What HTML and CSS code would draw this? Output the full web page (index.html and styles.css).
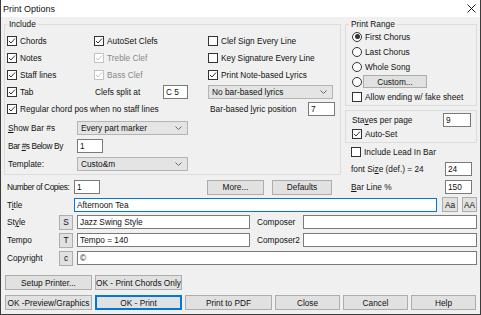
FILE: index.html
```html
<!DOCTYPE html>
<html lang="en">
<head>
  <meta charset="UTF-8">
  <title>Print Options</title>
  <link rel="stylesheet" href="styles.css">
</head>
<body>
  <div class="window">
    <div class="titlebar">
      <span>Print Options</span>
      <svg class="close" width="9" height="9" viewBox="0 0 9 9"><path d="M0.5 0.5L8.5 8.5M8.5 0.5L0.5 8.5"/></svg>
    </div>

    <div class="content">
      <div class="top">
        <div class="left">
          <fieldset class="include">
            <legend>Include</legend>
            <div class="row">
              <label class="chk c1"><span class="box"><svg viewBox="0 0 8 8"><polyline points="1,4 3,6 7,1.5"/></svg></span>Chords</label>
              <label class="chk c2"><span class="box"><svg viewBox="0 0 8 8"><polyline points="1,4 3,6 7,1.5"/></svg></span>AutoSet Clefs</label>
              <label class="chk c3"><span class="box"></span>Clef Sign Every Line</label>
            </div>
            <div class="row">
              <label class="chk c1"><span class="box"><svg viewBox="0 0 8 8"><polyline points="1,4 3,6 7,1.5"/></svg></span>Notes</label>
              <label class="chk c2 dis"><span class="box"><svg viewBox="0 0 8 8"><polyline points="1,4 3,6 7,1.5"/></svg></span>Treble Clef</label>
              <label class="chk c3"><span class="box"></span>Key Signature Every Line</label>
            </div>
            <div class="row">
              <label class="chk c1"><span class="box"><svg viewBox="0 0 8 8"><polyline points="1,4 3,6 7,1.5"/></svg></span>Staff lines</label>
              <label class="chk c2 dis"><span class="box"><svg viewBox="0 0 8 8"><polyline points="1,4 3,6 7,1.5"/></svg></span>Bass Clef</label>
              <label class="chk c3"><span class="box"><svg viewBox="0 0 8 8"><polyline points="1,4 3,6 7,1.5"/></svg></span>Print Note-based Lyrics</label>
            </div>
            <div class="row">
              <label class="chk c1"><span class="box"><svg viewBox="0 0 8 8"><polyline points="1,4 3,6 7,1.5"/></svg></span>Tab</label>
              <div class="c2 pair">
                <span class="split-label">Clefs split at</span>
                <span class="field w25">C 5</span>
              </div>
              <div class="c3">
                <span class="combo w125">No bar-based lyrics<svg class="chev" viewBox="0 0 7 4"><polyline points="0.5,0.5 3.5,3.5 6.5,0.5"/></svg></span>
              </div>
            </div>
            <div class="row">
              <label class="chk span12"><span class="box"><svg viewBox="0 0 8 8"><polyline points="1,4 3,6 7,1.5"/></svg></span>Regular chord pos when no staff lines</label>
              <div class="c3 pair">
                <span class="lyric-label">Bar-based <u>l</u>yric position</span>
                <span class="field w27">7</span>
              </div>
            </div>
            <div class="row tall gap-top">
              <span class="lbl70"><u>S</u>how Bar #s</span>
              <span class="combo w111">Every part marker<svg class="chev" viewBox="0 0 7 4"><polyline points="0.5,0.5 3.5,3.5 6.5,0.5"/></svg></span>
            </div>
            <div class="row tall">
              <span class="lbl70 tight">Bar <u>#</u>s Below By</span>
              <span class="field w26">1</span>
            </div>
            <div class="row tall">
              <span class="lbl70">Template:</span>
              <span class="combo w111">Custo&amp;m<svg class="chev" viewBox="0 0 7 4"><polyline points="0.5,0.5 3.5,3.5 6.5,0.5"/></svg></span>
            </div>
          </fieldset>

          <div class="row tall copies">
            <span class="lbl70 tight">Number of Copies:</span>
            <span class="field w26">1</span>
            <span class="btn more">More...</span>
            <span class="btn defaults">Defaults</span>
          </div>
        </div>

        <div class="right">
          <fieldset class="range">
            <legend>Print Range</legend>
            <label class="opt"><span class="radio on"></span>First Chorus</label>
            <label class="opt"><span class="radio"></span>Last Chorus</label>
            <label class="opt"><span class="radio"></span>Whole Song</label>
            <div class="opt"><span class="radio"></span><span class="btn custom">Custom...</span></div>
            <label class="opt"><span class="box"></span>Allow ending w/ fake sheet</label>
          </fieldset>

          <div class="staves">
            <div class="side-row">
              <span>Sta<u>v</u>es per page</span>
              <span class="field w28">9</span>
            </div>
            <label class="side-row chk"><span class="box"><svg viewBox="0 0 8 8"><polyline points="1,4 3,6 7,1.5"/></svg></span>Auto-Set</label>
          </div>

          <label class="side-row chk lead"><span class="box"></span>Include Lead In Bar</label>
          <div class="side-row size">
            <span>font Si<u>z</u>e (def.) = 24</span>
            <span class="field w27">24</span>
          </div>
          <div class="side-row barline">
            <span><u>B</u>ar Line %</span>
            <span class="field w27">150</span>
          </div>
        </div>
      </div>

      <div class="row title-row">
        <span class="lbl70">T<u>i</u>tle</span>
        <span class="field focus grow">Afternoon Tea</span>
        <span class="btn aa">Aa</span>
        <span class="btn aa2">AA</span>
      </div>
      <div class="row tall">
        <span class="lbl52">St<u>y</u>le</span>
        <span class="btn mini">S</span>
        <span class="field w173">Jazz Swing Style</span>
        <span class="comp-label">Composer</span>
        <span class="field grow"></span>
      </div>
      <div class="row tall">
        <span class="lbl52">Tempo</span>
        <span class="btn mini">T</span>
        <span class="field w173">Tempo = 140</span>
        <span class="comp-label">Composer2</span>
        <span class="field grow"></span>
      </div>
      <div class="row tall">
        <span class="lbl52">Copyright</span>
        <span class="btn mini">c</span>
        <span class="field grow">&copy;</span>
      </div>

      <div class="buttons first">
        <span class="btn wide">Setup Printer...</span>
        <span class="btn wide">OK - Print Chords Only</span>
      </div>
      <div class="buttons">
        <span class="btn wide">OK -Preview/Graphics</span>
        <span class="btn wide default">OK - Print</span>
        <span class="btn wide">Print to PDF</span>
        <span class="btn narrow">Close</span>
        <span class="btn narrow">Cancel</span>
        <span class="btn narrow">Help</span>
      </div>
    </div>
  </div>
</body>
</html>
```

FILE: styles.css
```css
* {
  box-sizing: border-box;
}

body {
  margin: 0;
  font-family: "Liberation Sans", Arial, sans-serif;
  font-size: 8.3px;
  color: #111;
}

u {
  text-decoration-thickness: 1px;
  text-underline-offset: 1px;
}

.window {
  width: 481px;
  height: 315px;
  background: #f0f0f0;
  border: 1px solid #3c3c3c;
  border-top: 0;
  display: flex;
  flex-direction: column;
  overflow: hidden;
}

.titlebar {
  height: 17px;
  flex: none;
  background: #fff;
  display: flex;
  align-items: center;
  justify-content: space-between;
  padding: 0 4px 0 2px;
  font-size: 9px;
}

.close path {
  stroke: #222;
  stroke-width: 1;
  fill: none;
}

.content {
  padding: 2px 3px 0 3px;
}

.top {
  display: flex;
  gap: 4px;
}

.left {
  width: 337px;
}

.right {
  width: 132px;
}

fieldset {
  margin: 0;
  min-width: 0;
  border: 1px solid #dcdcdc;
}

legend {
  padding: 0 2px;
  line-height: 10px;
  font-size: 8.3px;
}

.include {
  padding: 3px 2px 1px 2px;
}

.row {
  display: flex;
  align-items: center;
  height: 17px;
  white-space: nowrap;
}

.row.tall {
  height: 18px;
}

.gap-top {
  margin-top: 2px;
}

.c1 { width: 87px; }
.c2 { width: 114px; }
.c3 { width: 127px; }
.span12 { width: 201px; }

.pair {
  display: flex;
  align-items: center;
}

.split-label {
  width: 69px;
  padding-left: 1px;
}

.lyric-label {
  width: 100px;
  padding-left: 2px;
}

.chk, .opt {
  display: flex;
  align-items: center;
  white-space: nowrap;
}

.box {
  width: 10px;
  height: 10px;
  flex: none;
  border: 1px solid #333;
  background: #fff;
  margin-right: 3px;
  display: flex;
}

.box svg {
  width: 8px;
  height: 8px;
}

.box polyline {
  fill: none;
  stroke: #333;
  stroke-width: 1;
}

.dis {
  color: #8a8a8a;
}

.dis .box {
  border-color: #c4c4c4;
}

.dis .box polyline {
  stroke: #c4c4c4;
}

.radio {
  width: 10px;
  height: 10px;
  flex: none;
  border: 1px solid #333;
  border-radius: 50%;
  background: #fff;
  margin-right: 3px;
  display: flex;
  align-items: center;
  justify-content: center;
}

.radio.on::after {
  content: "";
  width: 5px;
  height: 5px;
  border-radius: 50%;
  background: #333;
}

.field {
  height: 14px;
  flex: none;
  border: 1px solid #7a7a7a;
  background: #fff;
  padding: 0 2px;
  display: flex;
  align-items: center;
  overflow: hidden;
}

.field.focus {
  border-color: #0078d7;
}

.field.grow {
  flex: 1;
}

.w25 { width: 25px; }
.w26 { width: 26px; }
.w27 { width: 27px; }
.w28 { width: 28px; }
.w173 { width: 173px; }

.combo {
  height: 14px;
  border: 1px solid #b4b4b4;
  background: #e4e4e4;
  padding: 0 5px 0 3px;
  display: flex;
  align-items: center;
  justify-content: space-between;
}

.w111 { width: 111px; }
.w125 { width: 125px; }

.chev {
  width: 7px;
  height: 4px;
}

.chev polyline {
  fill: none;
  stroke: #6a6a6a;
  stroke-width: 1;
}

.btn {
  height: 15px;
  flex: none;
  border: 1px solid #adadad;
  background: #e1e1e1;
  display: flex;
  align-items: center;
  justify-content: center;
  white-space: nowrap;
}

.lbl70 {
  width: 70px;
  flex: none;
  padding-left: 3px;
}

.lbl52 {
  width: 55px;
  flex: none;
  padding-left: 3px;
}

.include .lbl70 {
  padding-left: 1px;
}

.tight {
  letter-spacing: -0.4px;
}

.copies {
  margin-top: 3px;
}

.more {
  width: 57px;
  margin-left: 107px;
}

.defaults {
  width: 60px;
  margin-left: 8px;
}

/* right column */
.range {
  padding: 0 4px 1px 6px;
}

.range legend {
  margin-left: -3px;
}

.opt {
  height: 15px;
}

.custom {
  width: 64px;
  height: 13px;
  margin-left: -2px;
}

.staves {
  margin-top: 4px;
  border: 1px solid #dcdcdc;
  padding: 2px 0 1px 0;
}

.side-row {
  height: 14px;
  display: flex;
  align-items: center;
  justify-content: space-between;
  padding: 0 5px 0 6px;
  white-space: nowrap;
}

.side-row.chk {
  justify-content: flex-start;
}

.lead {
  margin-top: 2px;
}

.size {
  margin-top: 3px;
}

.barline {
  margin-top: 4px;
}

/* title / credits */
.title-row {
  height: 17px;
}

.aa {
  width: 16px;
  margin-left: 5px;
}

.aa2 {
  width: 15px;
  margin-left: 4px;
}

.mini {
  width: 14px;
  margin-right: 4px;
}

.comp-label {
  width: 53px;
  flex: none;
  padding-left: 7px;
}

/* bottom buttons */
.buttons {
  display: flex;
  gap: 3px;
  padding-left: 1px;
  margin-top: 5px;
}

.buttons.first {
  margin-top: 8px;
}

.wide {
  width: 87px;
}

.narrow {
  width: 65px;
}

.default {
  border-color: #0078d7;
  box-shadow: inset 0 0 0 1px #0078d7;
}
```
